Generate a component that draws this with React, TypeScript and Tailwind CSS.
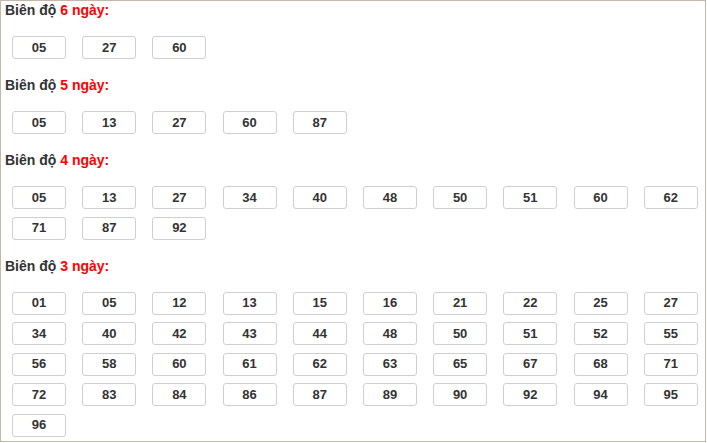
const groups: { days: number; nums: string[] }[] = [
  { days: 6, nums: ["05", "27", "60"] },
  { days: 5, nums: ["05", "13", "27", "60", "87"] },
  {
    days: 4,
    nums: ["05", "13", "27", "34", "40", "48", "50", "51", "60", "62", "71", "87", "92"],
  },
  {
    days: 3,
    nums: [
      "01", "05", "12", "13", "15", "16", "21", "22", "25", "27",
      "34", "40", "42", "43", "44", "48", "50", "51", "52", "55",
      "56", "58", "60", "61", "62", "63", "65", "67", "68", "71",
      "72", "83", "84", "86", "87", "89", "90", "92", "94", "95",
      "96",
    ],
  },
];

export default function App() {
  return (
    <div className="h-[443px] w-[707px] bg-white">
      <div
        className="h-[442px] w-[706px] border border-[#c3b7aa] pb-[5px] text-[13px] font-bold"
        style={{ fontFamily: '"Liberation Sans", Arial, sans-serif' }}
      >
        {groups.map((g, i) => (
          <div key={g.days}>
            <div className={`${i === 0 ? "h-[19px] leading-[19px]" : "mt-4 h-5 leading-5"} pl-1 text-[14px] text-[#333]`}>
              Biên độ <span className="text-[#f00]">{g.days} ngày:</span>
            </div>
            <div className="mt-4 flex flex-wrap gap-x-[16.2px] gap-y-[7.5px] pl-[11px]">
              {g.nums.map((n, j) => (
                <span
                  key={j}
                  className="flex h-[23px] w-[54px] items-center justify-center rounded-[3px] border border-[#cfcfcf] text-[#333]"
                >
                  {n}
                </span>
              ))}
            </div>
          </div>
        ))}
      </div>
    </div>
  );
}
